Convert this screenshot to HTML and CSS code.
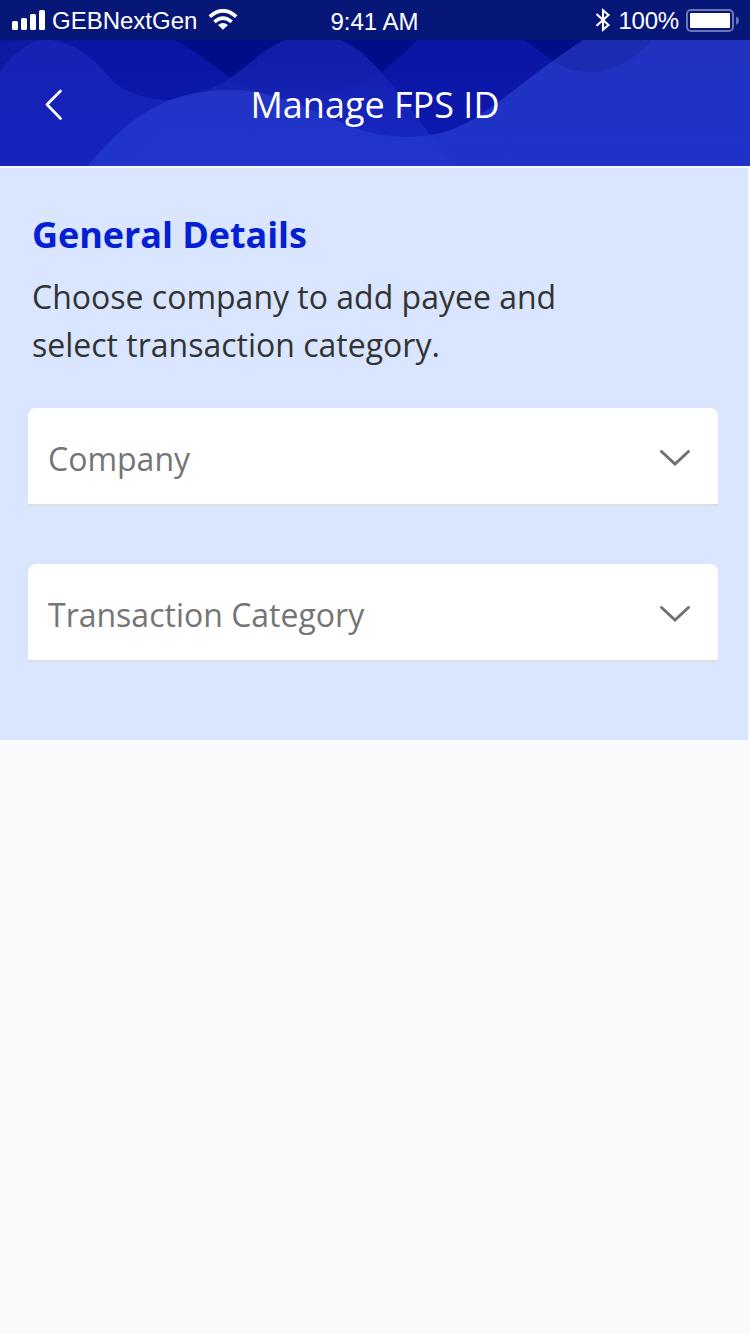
FILE: index.html
```html
<!DOCTYPE html>
<html lang="en">
<head>
<meta charset="utf-8">
<title>Manage FPS ID</title>
<link rel="stylesheet" href="styles.css">
</head>
<body>
<div class="status">
  <div class="status-left">
    <svg class="signal" width="34" height="20" viewBox="0 0 34 20" fill="#fff"><rect x="0" y="11" width="6" height="9" rx="1.5"/><rect x="9" y="8" width="6" height="12" rx="1.5"/><rect x="18" y="4" width="6" height="16" rx="1.5"/><rect x="27" y="0" width="6" height="20" rx="1.5"/></svg>
    <span class="carrier">GEBNextGen</span>
    <svg class="wifi" width="30" height="22" viewBox="0 0 30 22"><path d="M1.800 7.600Q15 -3.800 28.200 7.600" fill="none" stroke="#fff" stroke-width="3.800"/><path d="M6.400 12.800Q15 5.300 23.600 12.800" fill="none" stroke="#fff" stroke-width="3.600"/><path d="M10 16Q15 12 20 16L15 20.800Z" fill="#fff"/></svg>
  </div>
  <span class="time">9:41 AM</span>
  <div class="status-right">
    <svg class="bt" width="16" height="24" viewBox="0 0 16 24" fill="none" stroke="#fff" stroke-width="2.100"><path d="M1.500 6L13.500 17L8 21.700V2.300L13.500 7L1.500 17.700"/></svg>
    <span class="percent">100%</span>
    <svg class="battery" width="54" height="24" viewBox="0 0 54 24"><rect x="1" y="1" width="46" height="21" rx="4" fill="none" stroke="#6b77b5" stroke-width="2"/><rect x="4" y="4" width="40" height="15" rx="1" fill="#fff"/><path d="M50 7.500Q53 8.500 53 11.500T50 15.500Z" fill="#6b77b5"/></svg>
  </div>
</div>
<header class="header">
  <svg class="waves" width="750" height="126" viewBox="0 40 750 126">
    <defs>
      <linearGradient id="mid" x1="0" y1="0" x2="0" y2="1"><stop offset="0" stop-color="#0a15a4"/><stop offset="1" stop-color="#0c1bb0"/></linearGradient>
      <linearGradient id="hill" x1="0" y1="40" x2="0" y2="166" gradientUnits="userSpaceOnUse"><stop offset="0" stop-color="#1520ad"/><stop offset="1" stop-color="#1a2bc8"/></linearGradient>
      <linearGradient id="left" x1="0" y1="40" x2="0" y2="166" gradientUnits="userSpaceOnUse"><stop offset="0" stop-color="#1722b4"/><stop offset="1" stop-color="#1424bd"/></linearGradient>
      <linearGradient id="front" x1="0" y1="40" x2="0" y2="166" gradientUnits="userSpaceOnUse"><stop offset="0" stop-color="#2638c6"/><stop offset="1" stop-color="#2137ce"/></linearGradient>
      <clipPath id="left-clip"><path d="M0 40H172V100L130 166H0Z"/></clipPath>
    </defs>
    <rect y="40" width="750" height="126" fill="#000d88"/>
    <path d="M0 40H175C195 50 212 65 230 77C266 104 325 106 381 72Q398 60 417 40H525L553 61C581 80 620 76 652 40H750V166H0Z" fill="url(#mid)"/>
    <path d="M0 44Q12 41 30 40H60V90H0Z" fill="#1019a3"/>
    <path d="M130 109C185 101 214 89 230 78C250 64 265 48 285 40H340C358 47 369 59 381 72C408 102 430 138 455 166H130Z" fill="url(#hill)" opacity=".85"/>
    <path d="M0 73Q14 49 40 40H50C88 44 106 77 120 87Q140 99 166 100L175 100V166H0Z" fill="url(#left)" clip-path="url(#left-clip)"/>
    <path d="M88 166C130 114 170 90 230 90C300 90 340 137 405 137C475 137 492 100 583 40H750V166Z" fill="url(#front)" opacity=".84"/>
    <path d="M583 40H652C620 76 581 80 553 61Z" fill="#0a1a80" opacity=".2"/>
  </svg>
  <svg class="back" width="20" height="32" viewBox="0 0 20 32"><path d="M16.500 2L3 15.500L16.500 29.500" fill="none" stroke="#fff" stroke-width="2.700" stroke-linecap="round" stroke-linejoin="round"/></svg>
  <h1 class="title">Manage FPS ID</h1>
</header>
<main class="panel">
  <h2 class="heading">General Details</h2>
  <p class="intro">Choose company to add payee and<br>select transaction category.</p>
  <div class="fields">
    <div class="select"><span class="label">Company</span><svg width="32" height="20" viewBox="0 0 32 20"><path d="M2.500 2.500L16 15L29.500 2.500" fill="none" stroke="#707070" stroke-width="3" stroke-linecap="round"/></svg></div>
    <div class="select"><span class="label">Transaction Category</span><svg width="32" height="20" viewBox="0 0 32 20"><path d="M2.500 2.500L16 15L29.500 2.500" fill="none" stroke="#707070" stroke-width="3" stroke-linecap="round"/></svg></div>
  </div>
</main>
</body>
</html>
```
FILE: styles.css
```css
* { box-sizing: border-box; }
body { margin: 0; width: 750px; height: 1334px; background: #f9fafc; font-family: "Open Sans", sans-serif; overflow: hidden; }
svg { display: block; flex: none; }
.status { height: 40px; background: #071777; color: #fff; display: grid; grid-template-columns: 1fr auto 1fr; align-items: center; font: 24px/36px "Liberation Sans", Arial, sans-serif; white-space: nowrap; }
.status-left { display: flex; align-items: center; padding-left: 12px; }
.signal { margin-bottom: 0; }
.carrier { margin: 1px 11px 0 6px; }
.wifi { margin-bottom: 0; }
.time { padding-top: 3px; margin-left: -1px; }
.status-right { display: flex; align-items: center; justify-content: flex-end; padding-right: 10px; }
.bt { margin-bottom: 0; }
.percent { margin: 2px 7px 1px 7px; letter-spacing: -0.2px; }
.battery { margin-top: 1px; }
.header { height: 126px; display: grid; align-items: center; }
.header > * { grid-area: 1 / 1; }
.back { margin-left: 44px; margin-top: 3px; }
.title { margin: 0; color: #fff; font-size: 36px; line-height: 48px; font-weight: 400; text-align: center; padding-top: 4px; }
.panel { width: 748px; height: 574px; border-top: 2px solid #f9fafc; background: #dae6ff; padding: 42px 30px 0 28px; }
.heading { margin: 0 0 0 4px; font-size: 36px; line-height: 50px; font-weight: 700; letter-spacing: -0.07px; color: #0520d2; }
.intro { margin: 13px 0 0 4px; font-size: 32px; line-height: 48px; color: #333; white-space: nowrap; }
.fields { margin-top: 39px; display: grid; gap: 58px; }
.select { height: 98px; background: #fff; border-bottom: 2px solid #dcdde0; border-radius: 8px 8px 0 0; display: flex; align-items: center; justify-content: space-between; padding: 6px 27px 0 20px; }
.label { font-size: 32px; line-height: 48px; color: #757575; }
```
